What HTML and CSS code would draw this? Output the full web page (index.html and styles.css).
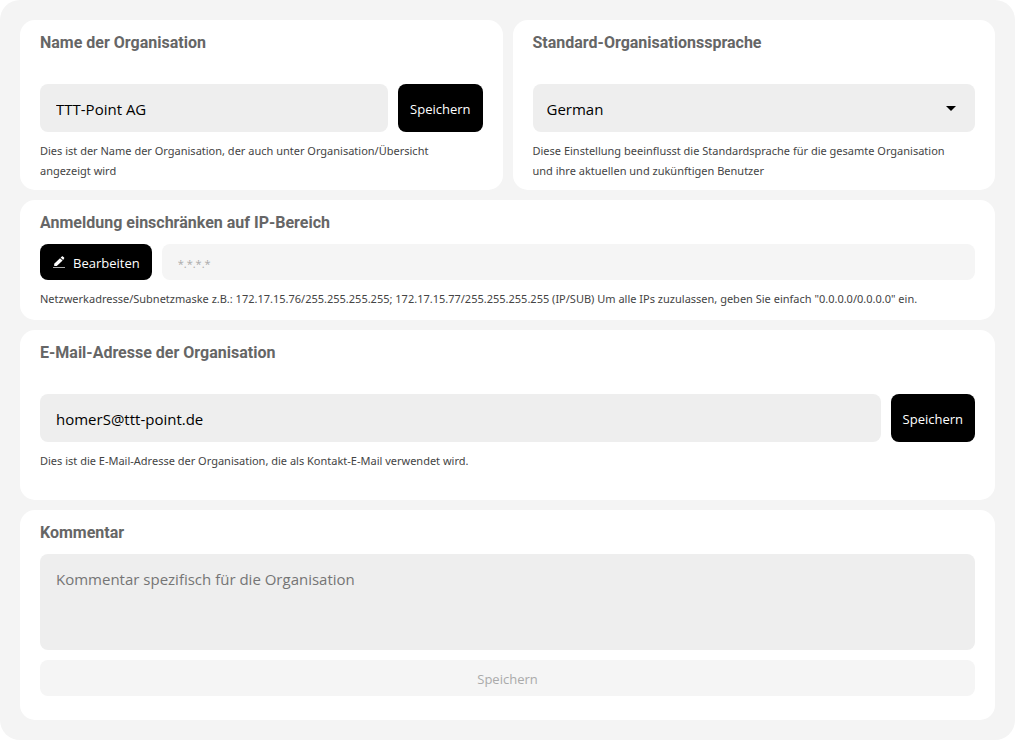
FILE: index.html
```html
<!DOCTYPE html>
<html lang="de">
<head>
    <meta charset="UTF-8">
    <meta name="viewport" content="width=device-width, initial-scale=1.0">
    <title>Organisation</title>
    <link rel="stylesheet" href="styles.css">
</head>
<body>

    <main class="settings">
        <section class="card">
            <h2><label for="org-name">Name der Organisation</label></h2>
            <div class="row spaced">
                <input class="field" id="org-name" type="text" value="TTT-Point AG">
                <button class="btn" type="button">Speichern</button>
            </div>
            <p class="help">Dies ist der Name der Organisation, der auch unter Organisation/Übersicht angezeigt wird</p>
        </section>

        <section class="card">
            <h2><label for="org-language">Standard-Organisationssprache</label></h2>
            <div class="row spaced select">
                <select class="field" id="org-language">
                    <option>German</option>
                    <option>English</option>
                </select>
                <svg class="arrow" viewBox="0 0 10 5" aria-hidden="true"><path d="M0 0h10L5 5z"/></svg>
            </div>
            <p class="help">Diese Einstellung beeinflusst die Standardsprache für die gesamte Organisation und ihre aktuellen und zukünftigen Benutzer</p>
        </section>

        <section class="card wide compact">
            <h2><label for="ip-range">Anmeldung einschränken auf IP-Bereich</label></h2>
            <div class="row">
                <button class="btn small" type="button">
                    <svg class="pen" viewBox="0 0 12 12" aria-hidden="true">
                        <path fill="#fff" d="M1.2 9.9V7.8L7 2.2l2.6 2.4-5.8 5.3zM7.6 1.6L8.9.4c.3-.3.7-.3 1 0l1.2 1.1c.3.3.3.7 0 1L10.1 4z"/>
                        <path fill="#aaa" d="M0 11h12v1H0z"/>
                    </svg>
                    Bearbeiten
                </button>
                <input class="field small" id="ip-range" type="text" placeholder="*.*.*.*" disabled>
            </div>
            <p class="help">Netzwerkadresse/Subnetzmaske z.B.: 172.17.15.76/255.255.255.255; 172.17.15.77/255.255.255.255 (IP/SUB) Um alle IPs zuzulassen, geben Sie einfach "0.0.0.0/0.0.0.0" ein.</p>
        </section>

        <section class="card wide">
            <h2><label for="org-mail">E-Mail-Adresse der Organisation</label></h2>
            <div class="row spaced">
                <input class="field" id="org-mail" type="email" value="homerS@ttt-point.de">
                <button class="btn" type="button">Speichern</button>
            </div>
            <p class="help">Dies ist die E-Mail-Adresse der Organisation, die als Kontakt-E-Mail verwendet wird.</p>
        </section>

        <section class="card wide comment">
            <h2><label for="comment">Kommentar</label></h2>
            <textarea class="field" id="comment" rows="3" placeholder="Kommentar spezifisch für die Organisation"></textarea>
            <button class="btn small" type="button" disabled>Speichern</button>
        </section>
    </main>

</body>
</html>
```

FILE: styles.css
```css
* {
    box-sizing: border-box;
}

body {
    margin: 0;
    background-color: #fff;
    font-family: 'Open Sans', sans-serif;
}

.settings {
    display: grid;
    grid-template-columns: 1fr 1fr;
    gap: 10px;
    padding: 20px;
    border-radius: 20px;
    background-color: #f4f4f4;
}

.card {
    min-width: 0;
    padding: 10px 20px 9px;
    border-radius: 15px;
    background-color: #fff;
}

.wide {
    grid-column: span 2;
}

.compact {
    padding-bottom: 11px;
}

.comment {
    padding-bottom: 24px;
}

h2 {
    margin: 0 0 8px;
    color: #666;
    font-family: Roboto, sans-serif;
    font-size: 16px;
    font-weight: bold;
    line-height: 26px;
}

.row {
    display: flex;
    gap: 10px;
}

.spaced {
    margin-top: 28px;
}

.field {
    flex: 1;
    width: 100%;
    min-width: 0;
    height: 48px;
    padding: 2px 16px 0;
    border: none;
    border-radius: 8px;
    background-color: #eee;
    color: #000;
    font-family: inherit;
    font-size: 15px;
}

select.field {
    appearance: none;
    padding: 2px 40px 0 14px;
}

textarea.field {
    display: block;
    height: 96px;
    padding: 13px 16px;
    line-height: 24px;
    resize: none;
}

.field::placeholder {
    color: #757575;
}

.field.small {
    height: 36px;
    font-size: 11px;
}

.field:disabled {
    background-color: #f5f5f5;
}

.field:disabled::placeholder {
    color: #aaa;
}

/* arrow lies over the select */
.select {
    position: relative;
}

.arrow {
    position: absolute;
    top: 22px;
    right: 19px;
    width: 10px;
    height: 5px;
    pointer-events: none;
}

.btn {
    display: flex;
    justify-content: center;
    align-items: center;
    gap: 8px;
    height: 48px;
    padding: 2px 12px 0;
    border: none;
    border-radius: 8px;
    background-color: #000;
    color: #fff;
    font-family: inherit;
    font-size: 13px;
    cursor: pointer;
}

.btn.small {
    height: 36px;
}

.comment .btn {
    width: 100%;
    margin-top: 10px;
}

.btn:disabled {
    background-color: #f5f5f5;
    color: #aaa;
    cursor: default;
}

.pen {
    width: 12px;
    height: 12px;
    margin: 0 0 3px 1px;
}

.help {
    min-height: 40px;
    margin: 9px 0 0;
    padding-right: 20px;
    color: #444;
    font-family: 'Noto Sans', sans-serif;
    font-size: 11px;
    line-height: 20px;
}

.compact .help {
    min-height: 20px;
}
```
